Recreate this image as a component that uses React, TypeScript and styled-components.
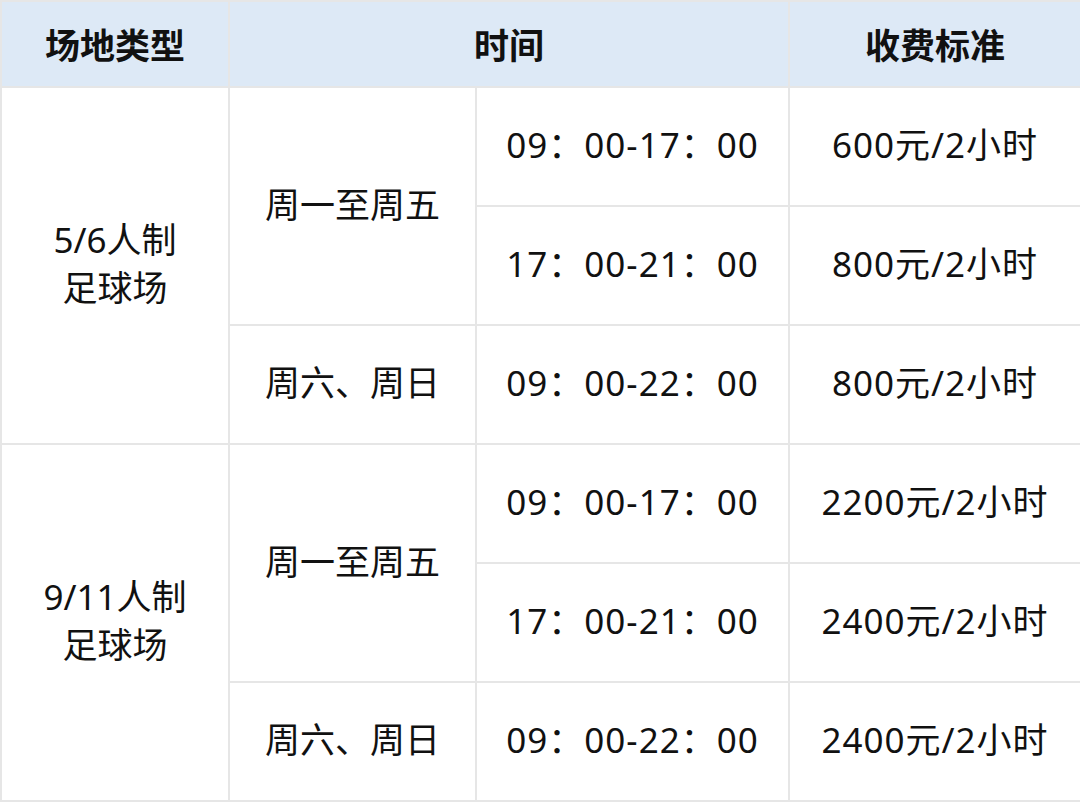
import React from 'react';
import styled, { createGlobalStyle } from 'styled-components';

const GlobalStyle = createGlobalStyle`
  html, body {
    margin: 0;
    padding: 0;
    background: #ffffff;
  }
`

const Table = styled.table`
  width: 1080px;
  border-collapse: collapse;
  table-layout: fixed;
  font-family: "Microsoft YaHei", "Noto Sans", "Noto Sans CJK SC", sans-serif;
  color: #111111;
`

const HeadCell = styled.th`
  height: 82px;
  padding: 0 0 2px;
  background: #dde9f6;
  border: 2px solid #e6e6e6;
  font-size: 35px;
  font-weight: 700;
  text-align: center;
  vertical-align: middle;
`

const Cell = styled.td<{ $numeric?: boolean }>`
  height: 114px;
  padding: 0 0 3px;
  border: 2px solid #e6e6e6;
  font-size: 35px;
  font-weight: 400;
  line-height: 48px;
  letter-spacing: ${(p) => (p.$numeric ? '1px' : '0')};
  text-align: center;
  vertical-align: middle;
  white-space: nowrap;
`

type Slot = { time: string; price: string };

type Venue = {
  name: [string, string];
  weekday: Slot[];
  weekend: Slot;
};

const venues: Venue[] = [
  {
    name: ['5/6人制', '足球场'],
    weekday: [
      { time: '09：00-17：00', price: '600元/2小时' },
      { time: '17：00-21：00', price: '800元/2小时' },
    ],
    weekend: { time: '09：00-22：00', price: '800元/2小时' },
  },
  {
    name: ['9/11人制', '足球场'],
    weekday: [
      { time: '09：00-17：00', price: '2200元/2小时' },
      { time: '17：00-21：00', price: '2400元/2小时' },
    ],
    weekend: { time: '09：00-22：00', price: '2400元/2小时' },
  },
];

function VenueRows({ venue }: { venue: Venue }) {
  const [first, second] = venue.weekday;
  return (
    <>
      <tr>
        <Cell rowSpan={3}>
          {venue.name[0]}
          <br />
          {venue.name[1]}
        </Cell>
        <Cell rowSpan={2}>周一至周五</Cell>
        <Cell $numeric>{first.time}</Cell>
        <Cell $numeric>{first.price}</Cell>
      </tr>
      <tr>
        <Cell $numeric>{second.time}</Cell>
        <Cell $numeric>{second.price}</Cell>
      </tr>
      <tr>
        <Cell>周六、周日</Cell>
        <Cell $numeric>{venue.weekend.time}</Cell>
        <Cell $numeric>{venue.weekend.price}</Cell>
      </tr>
    </>
  );
}

export default function App() {
  return (
    <>
      <GlobalStyle />
      <Table>
        <colgroup>
          <col style={{ width: 228 }} />
          <col style={{ width: 247 }} />
          <col style={{ width: 313 }} />
          <col style={{ width: 292 }} />
        </colgroup>
        <thead>
          <tr>
            <HeadCell>场地类型</HeadCell>
            <HeadCell colSpan={2}>时间</HeadCell>
            <HeadCell>收费标准</HeadCell>
          </tr>
        </thead>
        <tbody>
          {venues.map((v) => (
            <VenueRows key={v.name.join('')} venue={v} />
          ))}
        </tbody>
      </Table>
    </>
  );
}
